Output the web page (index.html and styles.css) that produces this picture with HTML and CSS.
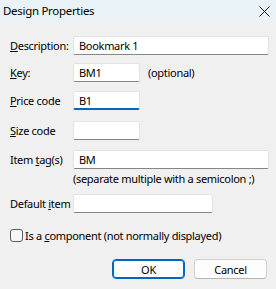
FILE: index.html
```html
<!DOCTYPE html>
<html lang="en">
<head>
  <meta charset="UTF-8">
  <title>Design Properties</title>
  <link rel="stylesheet" href="styles.css">
</head>
<body>

  <div class="dialog">
    <div class="titlebar">
      <span class="title">Design Properties</span>
      <svg class="close" width="11" height="11" viewBox="0 0 11 11">
        <path d="M0.5 0.5 L10.5 10.5 M10.5 0.5 L0.5 10.5" stroke="#1a1a1a" stroke-width="1" fill="none"/>
      </svg>
    </div>

    <div class="content">
      <div class="row row-desc">
        <label class="label"><u>D</u>escription:</label>
        <div class="field wide">Bookmark 1</div>
      </div>

      <div class="row row-key">
        <label class="label"><u>K</u>ey:</label>
        <div class="field short">BM1</div>
        <span class="note">(optional)</span>
      </div>

      <div class="row row-price">
        <label class="label"><u>P</u>rice code</label>
        <div class="field short focused">B1</div>
      </div>

      <div class="row row-size">
        <label class="label"><u>S</u>ize code</label>
        <div class="field short"></div>
      </div>

      <div class="row row-tag">
        <label class="label">Item <u>t</u>ag(s)</label>
        <div class="field wide">BM</div>
      </div>
      <div class="hint">(separate multiple with a semicolon ;)</div>

      <div class="row row-default">
        <label class="label">Default <u>i</u>tem</label>
        <div class="field medium"></div>
      </div>

      <div class="check-row">
        <span class="checkbox"></span>
        <span>Is a <u>c</u>omponent (not normally displayed)</span>
      </div>

      <div class="buttons">
        <button class="btn default">OK</button>
        <button class="btn">Cancel</button>
      </div>
    </div>
  </div>

</body>
</html>
```

FILE: styles.css
```css
body {
  margin: 0;
  font-family: "Noto Sans", Arial, sans-serif;
  font-size: 11px;
  letter-spacing: -0.3px;
  color: #000;
  background: #f0f0f0;
}
.dialog {
  width: 276px;
  height: 289px;
  background: #f0f0f0;
}
.titlebar {
  height: 22px;
  background: #e9f3f7;
  display: flex;
  align-items: center;
  justify-content: space-between;
  padding: 0 6px 0 3px;
  box-sizing: border-box;
}
.title {
  font-size: 11.5px;
  line-height: 22px;
}
.close {
  display: block;
  margin-top: 1px;
}
.content {
  padding: 0 7px 0 10px;
}
.row {
  display: flex;
  align-items: center;
  height: 19px;
  white-space: nowrap;
}
.row-desc { margin-top: 14px; }
.row-key { margin-top: 8px; }
.row-price { margin-top: 9px; }
.row-size { margin-top: 11px; }
.row-tag { margin-top: 10px; }
.row-default { margin-top: 7px; }
.label {
  width: 63px;
  flex: none;
}
.field {
  height: 19px;
  box-sizing: border-box;
  background: #fff;
  border: 1px solid #e3e3e3;
  border-bottom-color: #868686;
  border-radius: 2px;
  padding: 0 5px;
  line-height: 17px;
}
.field.wide { width: 196px; }
.field.short { width: 67px; }
.field.medium { width: 140px; }
.field.focused {
  border-bottom: 2px solid #0067c0;
}
.note {
  margin-left: 8px;
}
.hint {
  margin: 2px 0 0 63px;
  height: 16px;
  line-height: 16px;
  white-space: nowrap;
}
.check-row {
  display: flex;
  align-items: center;
  gap: 2px;
  margin-top: 15px;
  height: 14px;
  white-space: nowrap;
}
.checkbox {
  width: 13px;
  height: 13px;
  box-sizing: border-box;
  border: 1px solid #5d5d5d;
  border-radius: 3px;
  background: #f6f6f6;
}
.buttons {
  display: flex;
  justify-content: flex-end;
  gap: 9px;
  margin-top: 17px;
  padding-right: 2px;
}
.btn {
  width: 73px;
  height: 20px;
  box-sizing: border-box;
  font-family: inherit;
  font-size: 11px;
  letter-spacing: -0.3px;
  background: #fdfdfd;
  border: 1px solid #d0d0d0;
  border-bottom-color: #b5b5b5;
  border-radius: 4px;
  padding: 0;
  color: #000;
}
.btn.default {
  border: 1px solid #0067c0;
  box-shadow: inset 0 0 0 1px #0067c0;
}
```
